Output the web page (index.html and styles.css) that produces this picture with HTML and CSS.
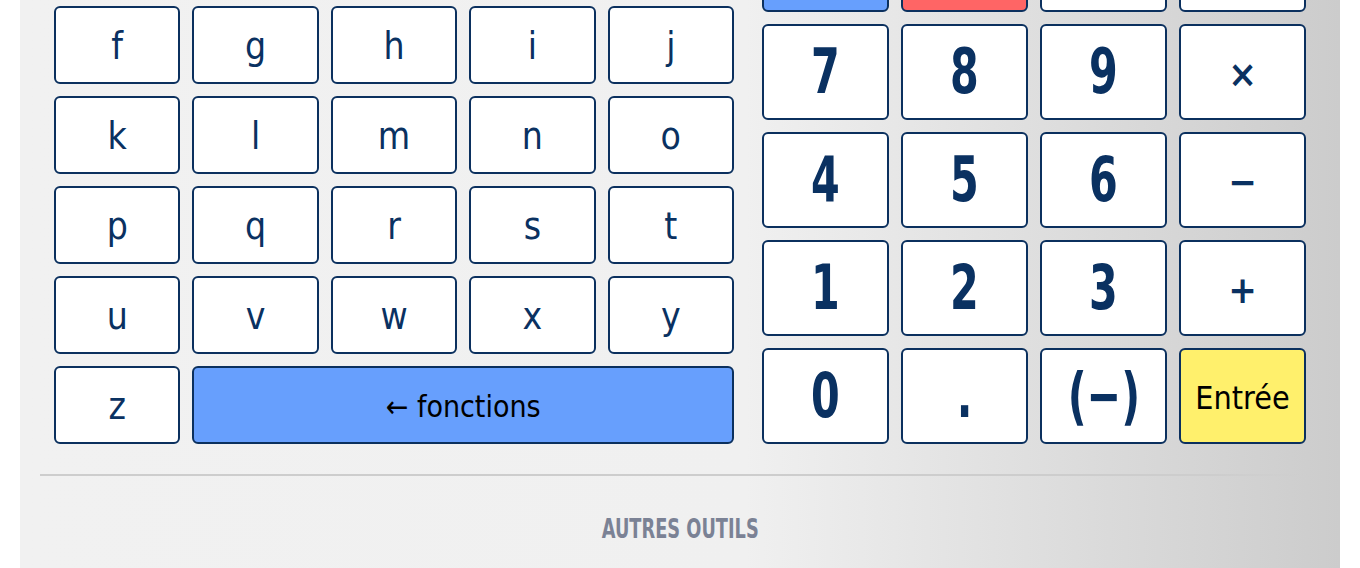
FILE: index.html
```html
<!DOCTYPE html>
<html lang="fr">
<head>
  <meta charset="UTF-8">
  <title>Clavier</title>
  <meta name="viewport" content="width=device-width, initial-scale=1">
  <link rel="stylesheet" href="styles.css">
</head>
<body>
<div class="panel">
  <div class="keyboard">
    <div class="letters">
      <!-- first row is scrolled out of view -->
      <button class="key" aria-label="a"></button>
      <button class="key" aria-label="b"></button>
      <button class="key" aria-label="c"></button>
      <button class="key" aria-label="d"></button>
      <button class="key" aria-label="e"></button>
      <button class="key">f</button>
      <button class="key">g</button>
      <button class="key">h</button>
      <button class="key">i</button>
      <button class="key">j</button>
      <button class="key">k</button>
      <button class="key">l</button>
      <button class="key">m</button>
      <button class="key">n</button>
      <button class="key">o</button>
      <button class="key">p</button>
      <button class="key">q</button>
      <button class="key">r</button>
      <button class="key">s</button>
      <button class="key">t</button>
      <button class="key">u</button>
      <button class="key">v</button>
      <button class="key">w</button>
      <button class="key">x</button>
      <button class="key">y</button>
      <button class="key">z</button>
      <button class="key key-blue key-wide">&larr; fonctions</button>
    </div>

    <div class="numpad">
      <button class="key key-blue" aria-label="2nde"></button>
      <button class="key key-red" aria-label="annuler"></button>
      <button class="key" aria-label="parenthèse ouvrante"></button>
      <button class="key" aria-label="parenthèse fermante"></button>
      <button class="key key-num"><span>7</span></button>
      <button class="key key-num"><span>8</span></button>
      <button class="key key-num"><span>9</span></button>
      <button class="key key-op">&times;</button>
      <button class="key key-num"><span>4</span></button>
      <button class="key key-num"><span>5</span></button>
      <button class="key key-num"><span>6</span></button>
      <button class="key key-op">&minus;</button>
      <button class="key key-num"><span>1</span></button>
      <button class="key key-num"><span>2</span></button>
      <button class="key key-num"><span>3</span></button>
      <button class="key key-op">+</button>
      <button class="key key-num"><span>0</span></button>
      <button class="key key-num"><span>.</span></button>
      <button class="key key-num"><span>(&minus;)</span></button>
      <button class="key key-yellow key-text">Entrée</button>
    </div>
  </div>

  <div class="separator"></div>

  <div class="tools-title"><span>AUTRES OUTILS</span></div>
</div>
</body>
</html>
```

FILE: styles.css
```css
* {
  box-sizing: border-box;
}

body {
  margin: 0;
  padding: 0;
  background-color: #fff;
  font-family: 'DejaVu Sans', sans-serif;
  overflow: hidden;
}

.panel {
  margin: 0 20px;
  padding: 0 34px;
  min-height: 652px;
  background: linear-gradient(to right, #f1f1f1 0%, #f0f0f0 55%, #cccccc 100%);
}

/* page is scrolled: the first row sits above the window */
.keyboard {
  display: flex;
  gap: 28px;
  margin-top: -84px;
}

.letters {
  width: 680px;
  display: grid;
  grid-template-columns: repeat(5, 1fr);
  grid-auto-rows: 78px;
  gap: 12px;
}

.numpad {
  width: 544px;
  display: grid;
  grid-template-columns: repeat(4, 1fr);
  grid-auto-rows: 96px;
  gap: 12px;
}

.key {
  display: flex;
  align-items: center;
  justify-content: center;
  padding: 3px 0 0;
  background-color: #fff;
  border: 2px solid #0b305e;
  border-radius: 6px;
  color: #0a3161;
  font-family: 'DejaVu Sans', sans-serif;
  font-stretch: condensed;
  font-size: 37px;
  line-height: 1;
  cursor: pointer;
}

.key-wide {
  grid-column: span 4;
}

.key-blue {
  background-color: #679ffd;
  color: #000;
  font-size: 30px;
}

.key-red {
  background-color: #ff6565;
  color: #000;
}

.key-yellow {
  background-color: #fff06c;
  color: #000;
}

.key-text {
  font-size: 32px;
}

.key-op {
  font-size: 38px;
  font-weight: bold;
}

.key-num {
  padding: 0;
  font-size: 62px;
  font-weight: bold;
}

.key-num span {
  display: inline-block;
  transform: scaleX(0.74);
}

.separator {
  height: 2px;
  margin: 30px -14px 0;
  background: linear-gradient(to right, #cdcdcd 0%, #cdcdcd 92%, rgba(205, 205, 205, 0) 100%);
}

.tools-title {
  margin-top: 36px;
  text-align: center;
  line-height: 34px;
  color: #7b8295;
  font-size: 26px;
  font-weight: bold;
  font-stretch: condensed;
}

.tools-title span {
  display: inline-block;
  transform: scaleX(0.76);
}
```
